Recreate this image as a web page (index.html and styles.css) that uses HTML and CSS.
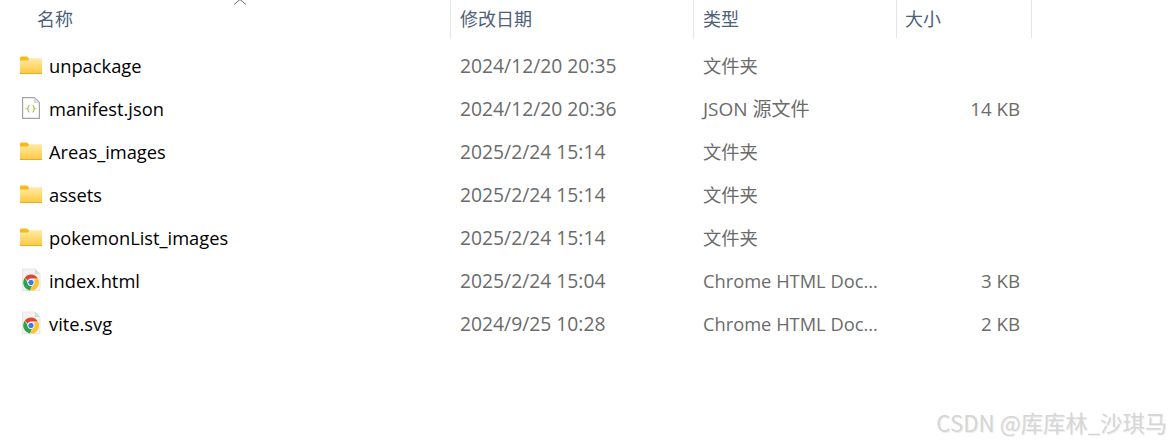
FILE: index.html
```html
<!DOCTYPE html>
<html lang="zh">
<head>
<meta charset="utf-8">
<title>文件列表</title>
<link rel="stylesheet" href="styles.css">
</head>
<body>
<svg class="defs" width="0" height="0" aria-hidden="true">
  <defs>
    <linearGradient id="fg" x1="0" y1="0" x2="0" y2="1"><stop offset="0" stop-color="#ffe9a0"/><stop offset="1" stop-color="#fcc93f"/></linearGradient>
    <symbol id="folder" viewBox="0 0 22 18">
      <path d="M0 2.200C0 1 .6.500 1.600.500H7l2.200 2.300H22V8H0z" fill="#f9b81b"/>
      <path d="M0 4.600h7.500L9.500 2.900H22V18H0z" fill="url(#fg)"/>
      <path d="M0 17h22v1H0z" fill="#eaa92a"/>
    </symbol>
    <symbol id="chrome" viewBox="0 0 20 24">
      <path d="M1.500 1h12.500L19 6v16.500H1.500z" fill="#f4f3f2" stroke="#e6e5e3"/>
      <path d="M14 1v5h5z" fill="#d9d8d6"/>
      <path d="M10 6.500a8 8 0 0 1 6.900 4H10a3.500 3.500 0 0 0-3.300 2.300L3.800 9.700A8 8 0 0 1 10 6.500z" fill="#e4432f"/>
      <path d="M3.800 9.700l3.500 6a3.600 3.600 0 0 0 4 1.600l-2.400 5.100A8 8 0 0 1 3.800 9.700z" fill="#30a24d"/>
      <path d="M16.900 10.500A8 8 0 0 1 9 22.400l3.400-5.800a3.500 3.500 0 0 0 .3-4.500z" fill="#fbc42c"/>
      <circle cx="10" cy="14.500" r="3.200" fill="#3b7de8" stroke="#fff" stroke-width="1"/>
    </symbol>
  </defs>
</svg>

<main class="list">
  <div class="row head">
    <div class="col c-name">名称</div>
    <div class="col c-date">修改日期</div>
    <div class="col c-type">类型</div>
    <div class="col c-size">大小</div>
  </div>

  <div class="rows">
    <div class="row item">
      <div class="col c-name"><svg class="ico folder"><use href="#folder"/></svg><span>unpackage</span></div>
      <div class="col c-date">2024/12/20 20:35</div>
      <div class="col c-type">文件夹</div>
      <div class="col c-size"></div>
    </div>
    <div class="row item">
      <div class="col c-name">
        <svg class="ico doc" viewBox="0 0 18 22">
          <path d="M.6.6h11.800l5 5v15.800H.6z" fill="#fff" stroke="#a3a3a3" stroke-width="1.200"/>
          <path d="M12 .6v5.500h5.500z" fill="#dcdcdc"/>
          <path d="M7.500 8.500c-1.300 0-1.300.7-1.300 1.800s0 1.200-1 1.500c1 .3 1 .5 1 1.500s0 1.800 1.300 1.800M10.500 8.500c1.300 0 1.300.7 1.300 1.800s0 1.200 1 1.500c-1 .3-1 .5-1 1.500s0 1.800-1.300 1.800" fill="none" stroke="#b5b94a" stroke-width="1.200"/>
        </svg><span>manifest.json</span></div>
      <div class="col c-date">2024/12/20 20:36</div>
      <div class="col c-type"><span class="wide">JSON 源文件</span></div>
      <div class="col c-size">14 KB</div>
    </div>
    <div class="row item">
      <div class="col c-name"><svg class="ico folder"><use href="#folder"/></svg><span>Areas_images</span></div>
      <div class="col c-date">2025/2/24 15:14</div>
      <div class="col c-type">文件夹</div>
      <div class="col c-size"></div>
    </div>
    <div class="row item">
      <div class="col c-name"><svg class="ico folder"><use href="#folder"/></svg><span>assets</span></div>
      <div class="col c-date">2025/2/24 15:14</div>
      <div class="col c-type">文件夹</div>
      <div class="col c-size"></div>
    </div>
    <div class="row item">
      <div class="col c-name"><svg class="ico folder"><use href="#folder"/></svg><span>pokemonList_images</span></div>
      <div class="col c-date">2025/2/24 15:14</div>
      <div class="col c-type">文件夹</div>
      <div class="col c-size"></div>
    </div>
    <div class="row item">
      <div class="col c-name"><svg class="ico chrome"><use href="#chrome"/></svg><span>index.html</span></div>
      <div class="col c-date">2025/2/24 15:04</div>
      <div class="col c-type">Chrome HTML Doc...</div>
      <div class="col c-size">3 KB</div>
    </div>
    <div class="row item">
      <div class="col c-name"><svg class="ico chrome"><use href="#chrome"/></svg><span>vite.svg</span></div>
      <div class="col c-date">2024/9/25 10:28</div>
      <div class="col c-type">Chrome HTML Doc...</div>
      <div class="col c-size">2 KB</div>
    </div>
  </div>
</main>

<svg class="sort" width="14" height="6" viewBox="0 0 14 6" aria-hidden="true"><path d="M1 5.500L7 .5l6 5" fill="none" stroke="#6d6d6d" stroke-width="1"/></svg>
<div class="mark">CSDN @库库林_沙琪马</div>
</body>
</html>
```

FILE: styles.css
```css
html, body {
  margin: 0;
  width: 1172px;
  height: 442px;
  overflow: hidden;
  background: #fff;
}

body {
  position: relative;
  font-family: "Open Sans", "Noto Sans CJK SC", sans-serif;
  font-size: 18.300px;
  color: #6b6b6b;
}

.defs {
  position: absolute;
}

.list {
  width: 1032px;
}

.row {
  display: grid;
  grid-template-columns: 450px 244px 203px 135px;
}

.col {
  padding-left: 9px;
  padding-right: 11px;
  white-space: nowrap;
  display: flex;
  align-items: center;
}

.head {
  height: 38px;
  color: #4c607a;
  font-family: "Noto Sans CJK SC", sans-serif;
  font-size: 18px;
}

.head .col {
  border-right: 1px solid #e5e5e5;
  padding-bottom: 2px;
}

.head .c-name {
  padding-left: 37px;
  border-right: 0;
}

.head .c-date {
  border-left: 1px solid #e5e5e5;
}

.head .c-size {
  padding-left: 8px;
}

.rows {
  padding-top: 5.500px;
}

.item {
  height: 43px;
}

.item .c-name {
  color: #000;
  padding-left: 0;
  font-size: 18.300px;
}

.item .c-date {
  padding-left: 10px;
  font-size: 19.300px;
}

.item .c-size {
  justify-content: flex-end;
  font-size: 18.700px;
  padding-right: 12px;
}

.wide {
  font-size: 19px;
}

.ico {
  flex: none;
  display: block;
}

.folder {
  width: 22px;
  height: 18px;
  margin: 0 7px 0 20px;
}

.doc {
  width: 18px;
  height: 22px;
  margin: 0 9px 0 22px;
}

.chrome {
  width: 20px;
  height: 24px;
  margin: 0 8px 0 21px;
}

.sort {
  position: absolute;
  left: 233px;
  top: -1px;
}

.mark {
  position: absolute;
  right: 5px;
  bottom: 4px;
  font-family: "Noto Sans CJK SC", sans-serif;
  font-size: 22.300px;
  color: #d6d6d6;
  text-shadow: 1px 1px 1px #ededed;
  white-space: nowrap;
}
```
